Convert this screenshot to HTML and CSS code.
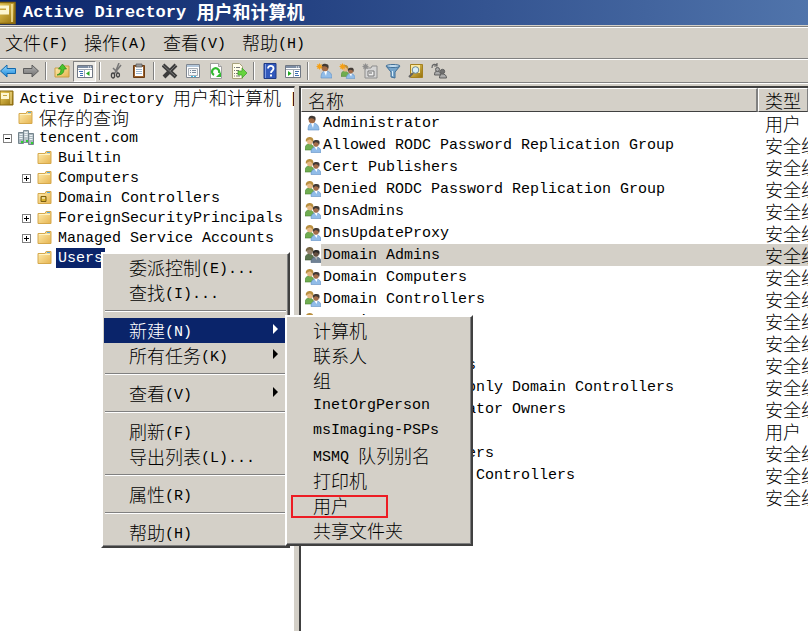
FILE: index.html
```
<!DOCTYPE html>
<html lang="zh-CN">
<head>
  <meta charset="UTF-8" />
  <meta name="viewport" content="width=device-width, initial-scale=1.0"/>
  <title>Active Directory 用户和计算机</title>
  <link rel="stylesheet" href="styles.css">
</head>
<body>

  <!-- Icon sprite -->
  <svg class="sprite" aria-hidden="true">
    <defs>
      <linearGradient id="gFolder" x1="0" y1="0" x2="1" y2="1"><stop offset="0" stop-color="#ffeeb0"/><stop offset="1" stop-color="#e6b450"/></linearGradient>
      <linearGradient id="gGold" x1="0" y1="0" x2="1" y2="1"><stop offset="0" stop-color="#f3d565"/><stop offset="1" stop-color="#94700c"/></linearGradient>
      <linearGradient id="gBlue" x1="0" y1="0" x2="0" y2="1"><stop offset="0" stop-color="#9adcff"/><stop offset="1" stop-color="#1583d8"/></linearGradient>
      <linearGradient id="gGrey" x1="0" y1="0" x2="0" y2="1"><stop offset="0" stop-color="#b4b4b4"/><stop offset="1" stop-color="#6e6e6e"/></linearGradient>
    </defs>
    <symbol id="i-book" viewBox="0 0 16 16">
      <path d="M1 1h13v14H1z" fill="url(#gGold)" stroke="#8a6a10"/>
      <path d="M2 3h8v6H2z" fill="#fdf6d2"/><path d="M4 5.500h4" stroke="#c9a63c"/><path d="M12 2v12" stroke="#fbe9a0"/>
    </symbol>
    <symbol id="i-folder" viewBox="0 0 16 16">
      <path d="M1 3.500h7l1-2h5v12H1z" fill="url(#gFolder)" stroke="#d5a84c"/>
      <path d="M10 2.500h3" stroke="#58a8d8"/><path d="M2 4.500h11" stroke="#fff3c4"/>
    </symbol>
    <symbol id="i-ou" viewBox="0 0 16 16">
      <path d="M1 3.500h7l1-2h5v12H1z" fill="url(#gFolder)" stroke="#d5a84c"/>
      <path d="M10 2.500h3" stroke="#58a8d8"/><path d="M4 6.500h5v5H4z" fill="#d7b12c" stroke="#7d5f10"/><path d="M5 8h3" stroke="#fff"/>
    </symbol>
    <symbol id="i-domain" viewBox="0 0 16 16">
      <path d="M5.500.5h5v12h-5z" fill="#b9c4ca" stroke="#7d8d95"/>
      <path d="M.5 2.500h5v11h-5zM10.500 3.500h5v11h-5z" fill="#a9b6bd" stroke="#75858d"/>
      <path d="M1.500 4.500h3M1.500 6.500h3M1.500 8.500h3M11.500 5.500h3M11.500 7.500h3M11.500 9.500h3M6.500 2.500h3M6.500 4.500h3M6.500 6.500h3" stroke="#eef4f6"/>
      <path d="M3 11h2v2H3zM8 10h2v2H8zM13 12h2v2h-2z" fill="#2fd32f"/>
    </symbol>
    <symbol id="i-user" viewBox="0 0 16 16">
      <path d="M3 15c0-4 1-7 5-7s6 3 6 7z" fill="#91bce8" stroke="#5e8fc4" stroke-width=".6"/>
      <path d="M6 8h3l-1 5z" fill="#fff"/>
      <circle cx="7" cy="5" r="3.300" fill="#a36b45"/><path d="M3.500 5C3 1 6 0 8 1c3 0 3 3 2 5L9 4C7 3 5 3 3.500 5z" fill="#413a35"/>
    </symbol>
    <symbol id="i-group" viewBox="0 0 16 16">
      <path d="M0 13c0-5 2-6 4-6s5 1 5 6z" fill="#70ad50" stroke="#4a8332" stroke-width=".6"/>
      <circle cx="5" cy="4.500" r="2.900" fill="#e6b985"/><path d="M1 5C0 1 3 0 5 0c3 0 4 3 3 5L6 3C4 2 3 3 1 5z" fill="#b98f3f"/>
      <path d="M6 15.500c0-4 2-5.500 5-5.500s5 1.500 5 5.500z" fill="#91bce8" stroke="#5e8fc4" stroke-width=".6"/>
      <path d="M9.500 10h3l-1 3z" fill="#fff"/>
      <circle cx="11" cy="7" r="2.800" fill="#a56d49"/><path d="M8 7c-1-4 2-4 4-4 3 0 3 3 2 5l-1-2c-2-1-3-1-5 1z" fill="#413a35"/>
    </symbol>
    <symbol id="i-back" viewBox="0 0 16 16"><path d="M.5 8L7 2v3.500h8.500v5H7V14z" fill="url(#gBlue)" stroke="#1268ac"/></symbol>
    <symbol id="i-forward" viewBox="0 0 16 16"><path d="M15.500 8L9 2v3.500H.5v5H9V14z" fill="url(#gGrey)" stroke="#5c5c5c"/></symbol>
    <symbol id="i-up" viewBox="0 0 16 16">
      <path d="M1 5h6l2-2h6v11H1z" fill="url(#gFolder)" stroke="#c99d44"/>
      <path d="M3 12c3-1 4-3 4-6H4.500L8.500 1l4 5H10c0 4-2 6-7 6z" fill="#49c52d" stroke="#258717" stroke-width=".7"/>
    </symbol>
    <symbol id="i-tree" viewBox="0 0 16 16">
      <path d="M.5 2.500h15v12H.5z" fill="#fff" stroke="#707783"/><path d="M1 3h14v2H1z" fill="#7d8da4"/><path d="M11 4h1m1 0h1" stroke="#fff"/>
      <path d="M1 6.500h14M7.500 7v7" stroke="#a2a9b3"/><path d="M2 8.500h4M3 10.500h3M3 12.500h3" stroke="#3f6fb0"/><path d="M12.500 8v5L9 10.500z" fill="#22a822"/>
    </symbol>
    <symbol id="i-cut" viewBox="0 0 16 16">
      <path d="M11 0L7 10M5 5L10 10M13 2L6 11" fill="none" stroke="#777" stroke-width="1.500"/>
      <ellipse cx="5" cy="12.500" rx="1.600" ry="2.500" fill="none" stroke="#444" stroke-width="1.300"/><ellipse cx="10" cy="12" rx="1.500" ry="2" fill="none" stroke="#444" stroke-width="1.300"/>
    </symbol>
    <symbol id="i-clipboard" viewBox="0 0 16 16">
      <path d="M2.500 2.500h11v12h-11z" fill="#9b602a" stroke="#6b3c14"/><path d="M4 4h8v9H4z" fill="#fff"/>
      <path d="M5 1h6v3H5z" fill="#999" stroke="#555" stroke-width=".7"/><path d="M5 6.500h6M5 8.500h6M5 10.500h6" stroke="#9eb6cd"/>
    </symbol>
    <symbol id="i-delete" viewBox="0 0 16 16">
      <path d="M1 2l13 12M14 2L2 14" stroke="#3c3c3c" stroke-width="4"/><path d="M1 2l12 11M14 2L8 8" stroke="#777" stroke-width="1"/>
    </symbol>
    <symbol id="i-props" viewBox="0 0 16 16">
      <path d="M1.500 1.500h13v13h-13z" fill="#fff" stroke="#808790"/><path d="M2 2h12v2H2z" fill="#b3c7db"/>
      <path d="M3.500 5.500h9v7h-9z" fill="#f4f6f8" stroke="#a8afb6"/><path d="M5 7.500h1m1 0h4M5 9.500h1m1 0h4" stroke="#7d8c9d"/><path d="M6 13.500h2m1 0h2" stroke="#35b8e8"/>
    </symbol>
    <symbol id="i-refresh" viewBox="0 0 16 16">
      <path d="M2.500.5h8l3 3v12h-11z" fill="#fff" stroke="#a0a0a0"/><path d="M10.500.5v3h3" fill="#ddd" stroke="#a0a0a0"/>
      <path d="M6 12a3.600 3.600 0 1 1 5-2" fill="none" stroke="#31b931" stroke-width="2.200"/><path d="M13 9v5H8z" fill="#31b931"/>
    </symbol>
    <symbol id="i-export" viewBox="0 0 16 16">
      <path d="M1.500.5h7l3 3v12h-10z" fill="#fffde9" stroke="#a8a27c"/><path d="M3 4.500h1m1 0h4M3 7.500h1m1 0h3M3 10.500h1m1 0h3M3 13h1m1 0h4" stroke="#777"/>
      <path d="M7 8h4V5l5 5-5 5v-3H7z" fill="#66d43e" stroke="#39982a" stroke-width=".7"/>
    </symbol>
    <symbol id="i-help" viewBox="0 0 16 16">
      <path d="M2 .5h12v15H2z" fill="#3158bc" stroke="#203b84"/><path d="M3.500 1v14" stroke="#7f9be2"/>
      <path d="M6 5.500C6 2 11.500 2 11.500 5.500 11.500 8 9 7.500 9 10" fill="none" stroke="#fff" stroke-width="1.800"/><path d="M8 11.500h2v2H8z" fill="#fff"/>
    </symbol>
    <symbol id="i-pane" viewBox="0 0 16 16">
      <path d="M.5 2.500h15v12H.5z" fill="#fff" stroke="#707783"/><path d="M1 3h14v2H1z" fill="#7d8da4"/><path d="M11 4h1m1 0h1" stroke="#fff"/>
      <path d="M1 6.500h14M8.500 7v7" stroke="#a2a9b3"/><path d="M10 8.500h4M10 10.500h3M10 12.500h4" stroke="#3f6fb0"/><path d="M3 8v5l3.500-2.500z" fill="#22a822"/>
    </symbol>
    <symbol id="i-star" viewBox="0 0 16 16"><path d="M4 0l1 2 2-1-1 2 2 1-2 1 1 2-2-1-1 2-1-2-2 1 1-2-2-1 2-1-1-2 2 1z"/></symbol>
    <symbol id="i-newuser" viewBox="0 0 16 16"><use href="#i-user" x="2" width="16" height="16"/><use href="#i-star" width="14" height="14" fill="#f5a016"/></symbol>
    <symbol id="i-newgroup" viewBox="0 0 16 16"><use href="#i-group" x="2" y="2" width="14" height="14"/><use href="#i-star" width="14" height="14" fill="#f5a016"/></symbol>
    <symbol id="i-newou" viewBox="0 0 16 16">
      <path d="M3 5h6l1-2h5v12H3z" fill="#d5d5d5" stroke="#8d8d8d"/><path d="M6 8h6v5H6z" fill="#eee" stroke="#777"/><path d="M7 10h3" stroke="#666"/>
      <use href="#i-star" width="14" height="14" fill="#8e8e8e"/>
    </symbol>
    <symbol id="i-filter" viewBox="0 0 16 16">
      <path d="M1 3l5 6v5l4 1V9l5-6z" fill="#76a5cb" stroke="#416f97"/><ellipse cx="8" cy="3" rx="7" ry="1.500" fill="#c6e0f1" stroke="#416f97"/><path d="M7.500 8v5" stroke="#d9edf9"/>
    </symbol>
    <symbol id="i-find" viewBox="0 0 16 16">
      <path d="M2.500 1.500h12v13h-12z" fill="url(#gGold)" stroke="#a5811e"/><path d="M3 2h9v8H3z" fill="#fbe9a0"/>
      <path d="M5 10l-4 4" stroke="#646464" stroke-width="2"/><circle cx="7.500" cy="7" r="3.300" fill="#d9f0fa" stroke="#6b8794"/>
    </symbol>
    <symbol id="i-addto" viewBox="0 0 16 16">
      <g fill="#aaa" stroke="#5f5f5f"><path d="M3.500 12c0-3 1-4 3-4s3 1 3 4zM8.500 15c0-3 1-4 3-4s4 1 4 4z"/><circle cx="6.500" cy="6.500" r="2"/><circle cx="11.500" cy="8.500" r="2.200" fill="#707070"/></g>
      <path d="M1 5C1 1 3 1 6 2M6 0v3H3" fill="none" stroke="#666" stroke-width="1.200"/>
    </symbol>
  </svg>

  <header class="titlebar">
    <svg class="title-icon"><use href="#i-book"/></svg>
    <h1>Active Directory <span class="zh">用户和计算机</span></h1>
  </header>

  <nav class="menubar">
    <button><span class="zh">文件</span>(F)</button>
    <button><span class="zh">操作</span>(A)</button>
    <button><span class="zh">查看</span>(V)</button>
    <button><span class="zh">帮助</span>(H)</button>
  </nav>

  <div class="toolbar">
    <button aria-label="后退"><svg><use href="#i-back"/></svg></button>
    <button aria-label="前进"><svg><use href="#i-forward"/></svg></button>
    <i class="divider"></i>
    <button aria-label="上一级"><svg><use href="#i-up"/></svg></button>
    <button class="pressed" aria-label="控制台树"><svg><use href="#i-tree"/></svg></button>
    <i class="divider"></i>
    <button aria-label="剪切"><svg><use href="#i-cut"/></svg></button>
    <button aria-label="粘贴"><svg><use href="#i-clipboard"/></svg></button>
    <i class="divider"></i>
    <button aria-label="删除"><svg><use href="#i-delete"/></svg></button>
    <button aria-label="属性"><svg><use href="#i-props"/></svg></button>
    <button aria-label="刷新"><svg><use href="#i-refresh"/></svg></button>
    <button aria-label="导出列表"><svg><use href="#i-export"/></svg></button>
    <i class="divider"></i>
    <button aria-label="帮助"><svg><use href="#i-help"/></svg></button>
    <button aria-label="操作窗格"><svg><use href="#i-pane"/></svg></button>
    <i class="divider"></i>
    <button aria-label="新建用户"><svg><use href="#i-newuser"/></svg></button>
    <button aria-label="新建组"><svg><use href="#i-newgroup"/></svg></button>
    <button aria-label="新建组织单位"><svg><use href="#i-newou"/></svg></button>
    <button aria-label="筛选"><svg><use href="#i-filter"/></svg></button>
    <button aria-label="查找"><svg><use href="#i-find"/></svg></button>
    <button aria-label="添加到组"><svg><use href="#i-addto"/></svg></button>
  </div>

  <main class="panes">
    <!-- Console tree -->
    <section class="tree">
      <div class="node root"><svg><use href="#i-book"/></svg><span class="label">Active Directory <span class="zh">用户和计算机</span> [</span></div>
      <ul>
        <li class="node"><i class="box"></i><svg><use href="#i-folder"/></svg><span class="label"><span class="zh">保存的查询</span></span></li>
        <li>
          <div class="node"><i class="box minus"></i><svg><use href="#i-domain"/></svg><span class="label">tencent.com</span></div>
          <ul>
            <li class="node"><i class="box"></i><svg><use href="#i-folder"/></svg><span class="label">Builtin</span></li>
            <li class="node"><i class="box plus"></i><svg><use href="#i-folder"/></svg><span class="label">Computers</span></li>
            <li class="node"><i class="box"></i><svg><use href="#i-ou"/></svg><span class="label">Domain Controllers</span></li>
            <li class="node"><i class="box plus"></i><svg><use href="#i-folder"/></svg><span class="label">ForeignSecurityPrincipals</span></li>
            <li class="node"><i class="box plus"></i><svg><use href="#i-folder"/></svg><span class="label">Managed Service Accounts</span></li>
            <li class="node selected"><i class="box"></i><svg><use href="#i-folder"/></svg><span class="label">Users</span></li>
          </ul>
        </li>
      </ul>
    </section>

    <!-- Object list -->
    <section class="list">
      <table>
        <thead>
          <tr><th class="col-name"><span class="zh">名称</span></th><th><span class="zh">类型</span></th></tr>
        </thead>
        <tbody>
          <tr><td><svg><use href="#i-user"/></svg><span>Administrator</span></td><td class="zh">用户</td></tr>
          <tr><td><svg><use href="#i-group"/></svg><span>Allowed RODC Password Replication Group</span></td><td class="zh">安全组</td></tr>
          <tr><td><svg><use href="#i-group"/></svg><span>Cert Publishers</span></td><td class="zh">安全组</td></tr>
          <tr><td><svg><use href="#i-group"/></svg><span>Denied RODC Password Replication Group</span></td><td class="zh">安全组</td></tr>
          <tr><td><svg><use href="#i-group"/></svg><span>DnsAdmins</span></td><td class="zh">安全组</td></tr>
          <tr><td><svg><use href="#i-group"/></svg><span>DnsUpdateProxy</span></td><td class="zh">安全组</td></tr>
          <tr class="current"><td><svg><use href="#i-group"/></svg><span>Domain Admins</span></td><td class="zh">安全组</td></tr>
          <tr><td><svg><use href="#i-group"/></svg><span>Domain Computers</span></td><td class="zh">安全组</td></tr>
          <tr><td><svg><use href="#i-group"/></svg><span>Domain Controllers</span></td><td class="zh">安全组</td></tr>
          <tr><td><svg><use href="#i-group"/></svg><span>Domain Guests</span></td><td class="zh">安全组</td></tr>
          <tr><td><svg><use href="#i-group"/></svg><span>Domain Users</span></td><td class="zh">安全组</td></tr>
          <tr><td><svg><use href="#i-group"/></svg><span>Enterprise Admins</span></td><td class="zh">安全组</td></tr>
          <tr><td><svg><use href="#i-group"/></svg><span>Enterprise Read-only Domain Controllers</span></td><td class="zh">安全组</td></tr>
          <tr><td><svg><use href="#i-group"/></svg><span>Group Policy Creator Owners</span></td><td class="zh">安全组</td></tr>
          <tr><td><svg><use href="#i-user"/></svg><span>Guest</span></td><td class="zh">用户</td></tr>
          <tr><td><svg><use href="#i-group"/></svg><span>RAS and IAS Servers</span></td><td class="zh">安全组</td></tr>
          <tr><td><svg><use href="#i-group"/></svg><span>Read-only Domain Controllers</span></td><td class="zh">安全组</td></tr>
          <tr><td><svg><use href="#i-group"/></svg><span>Schema Admins</span></td><td class="zh">安全组</td></tr>
        </tbody>
      </table>
    </section>
  </main>

  <!-- Context menu of the Users node -->
  <div class="popup context">
    <button><span class="zh">委派控制</span>(E)...</button>
    <button><span class="zh">查找</span>(I)...</button>
    <hr>
    <button class="more open"><span class="zh">新建</span>(N)</button>
    <button class="more"><span class="zh">所有任务</span>(K)</button>
    <hr>
    <button class="more"><span class="zh">查看</span>(V)</button>
    <hr>
    <button><span class="zh">刷新</span>(F)</button>
    <button><span class="zh">导出列表</span>(L)...</button>
    <hr>
    <button><span class="zh">属性</span>(R)</button>
    <hr>
    <button><span class="zh">帮助</span>(H)</button>
  </div>

  <div class="popup submenu">
    <button><span class="zh">计算机</span></button>
    <button><span class="zh">联系人</span></button>
    <button><span class="zh">组</span></button>
    <button>InetOrgPerson</button>
    <button>msImaging-PSPs</button>
    <button>MSMQ <span class="zh">队列别名</span></button>
    <button><span class="zh">打印机</span></button>
    <button class="marked"><span class="zh">用户</span></button>
    <button><span class="zh">共享文件夹</span></button>
  </div>

</body>
</html>
```
FILE: styles.css
```
:root {
  --face: #d4d0c8;
  --shadow: #808080;
  --dark: #404040;
  --select: #0a246a;
}

*,
*::before,
*::after {
  box-sizing: border-box;
}

body {
  margin: 0;
  height: 100vh;
  display: flex;
  flex-direction: column;
  overflow: hidden;
  background: var(--face);
  color: #000;
  font-family: "Liberation Mono", "Noto Sans CJK SC", monospace;
  font-size: 15px;
  white-space: nowrap;
}

.zh {
  font-family: "Noto Sans CJK SC", sans-serif;
  font-size: 18px;
  font-weight: 300;
}

span.zh {
  vertical-align: -2px;
}

button {
  margin: 0;
  padding: 0;
  border: none;
  background: none;
  color: inherit;
  font: inherit;
  white-space: pre;
}

svg {
  width: 16px;
  height: 16px;
  flex: none;
}

.sprite {
  position: absolute;
  width: 0;
  height: 0;
}

/* Title bar */
.titlebar {
  display: flex;
  align-items: center;
  gap: 5px;
  height: 25px;
  flex: none;
  background: linear-gradient(to right, #0a246a, #5074ab);
  color: #fff;
}

.title-icon {
  width: 24px;
  height: 24px;
  margin-left: -6px;
}

h1 {
  margin: 0;
  font-size: 17px;
  line-height: 24px;
}

h1 .zh {
  font-weight: bold;
  line-height: 22px;
}

/* Menu bar and toolbar */
.menubar,
.toolbar {
  display: flex;
  align-items: center;
  flex: none;
  border-top: 1px solid #fff;
  border-bottom: 1px solid var(--shadow);
}

.menubar {
  gap: 16px;
  height: 32px;
  margin-top: 2px;
  padding: 0 5px;
  box-shadow: 0 -1px var(--shadow);
}

.menubar button,
.popup button {
  line-height: 25px;
}

.menubar .zh,
.popup .zh {
  line-height: 24px;
}

.toolbar {
  height: 24px;
  margin-left: -4px;
}

.toolbar button {
  display: flex;
  align-items: center;
  justify-content: center;
  width: 23px;
  height: 21px;
}

.toolbar .pressed {
  border: 1px solid;
  border-color: var(--shadow) #fff #fff var(--shadow);
  background: #edebe6;
}

.divider {
  width: 2px;
  height: 18px;
  margin: 0 3px;
  border-left: 1px solid var(--shadow);
  border-right: 1px solid #fff;
}

/* Panes */
.panes {
  display: flex;
  flex: 1;
  min-height: 0;
  border-top: 1px solid #fff;
  padding-top: 2px;
}

.tree,
.list {
  overflow: hidden;
  background: #fff;
  border-top: 2px solid var(--dark);
}

.tree {
  flex: 0 0 295px;
  border-right: 1px solid var(--face);
}

.tree ul {
  margin: 0;
  padding: 0;
  list-style: none;
}

.tree ul ul {
  padding-left: 19px;
}

.node {
  display: flex;
  align-items: center;
  height: 20px;
}

.node .label {
  height: 20px;
  margin-left: 3px;
  padding: 0 2px;
  line-height: 22px;
}

.label .zh {
  line-height: 18px;
}

.root svg {
  margin-left: -1px;
}

.box {
  width: 9px;
  height: 9px;
  flex: none;
  margin: 0 6px 0 3px;
}

.plus,
.minus {
  border: 1px solid var(--shadow);
  background: linear-gradient(#000, #000) center / 5px 1px no-repeat;
}

.plus {
  background: linear-gradient(#000, #000) center / 5px 1px no-repeat,
    linear-gradient(#000, #000) center / 1px 5px no-repeat;
}

.selected .label {
  background: var(--select);
  color: #fff;
}

.list {
  flex: 1;
  margin-left: 4px;
  border-left: 2px solid var(--dark);
}

table {
  width: 100%;
  table-layout: fixed;
  border-collapse: separate;
  border-spacing: 0;
}

th {
  height: 24px;
  padding: 0 6px;
  background: var(--face);
  border: 1px solid;
  border-color: #fff var(--shadow) var(--dark) #fff;
  font-weight: normal;
  text-align: left;
}

th .zh {
  display: block;
  line-height: 22px;
}

.col-name {
  width: 457px;
  border-right: 2px solid var(--shadow);
}

td {
  height: 22px;
  padding: 0;
  line-height: 22px;
}

td:first-child {
  display: flex;
  align-items: center;
  padding-left: 4px;
}

td:first-child span {
  flex: 1;
  height: 22px;
  padding-left: 2px;
  line-height: 24px;
}

td:last-child {
  padding-left: 7px;
}

.current span,
.current td:last-child {
  background: var(--face);
}

.current svg {
  filter: brightness(0.7) saturate(0.6);
}

/* Popup menus */
.popup {
  position: absolute;
  display: flex;
  flex-direction: column;
  padding: 1px;
  background: var(--face);
  border: 2px solid;
  border-color: #fff var(--dark) var(--dark) #fff;
  box-shadow: inset -1px -1px var(--shadow);
}

.popup button {
  height: 25px;
  padding-left: 25px;
  text-align: left;
}

.popup hr {
  width: auto;
  height: 2px;
  margin: 5px 1px 6px;
  border: none;
  border-top: 1px solid var(--shadow);
  border-bottom: 1px solid #fff;
}

.context {
  left: 101px;
  top: 252px;
  width: 189px;
}

.submenu {
  left: 285px;
  top: 315px;
  width: 188px;
}

.popup .submenu button {
  padding-left: 24px;
}

.more {
  position: relative;
}

.more::after {
  content: "";
  position: absolute;
  right: 9px;
  top: 6px;
  border: 5px solid transparent;
  border-left-color: currentColor;
  border-right: none;
}

.popup .open {
  background: var(--select);
  color: #fff;
}

/* Red frame round the entry to pick */
.marked {
  position: relative;
}

.marked::before {
  content: "";
  position: absolute;
  left: 3px;
  top: 2px;
  width: 97px;
  height: 23px;
  border: 2px solid #ed1c24;
}
```
